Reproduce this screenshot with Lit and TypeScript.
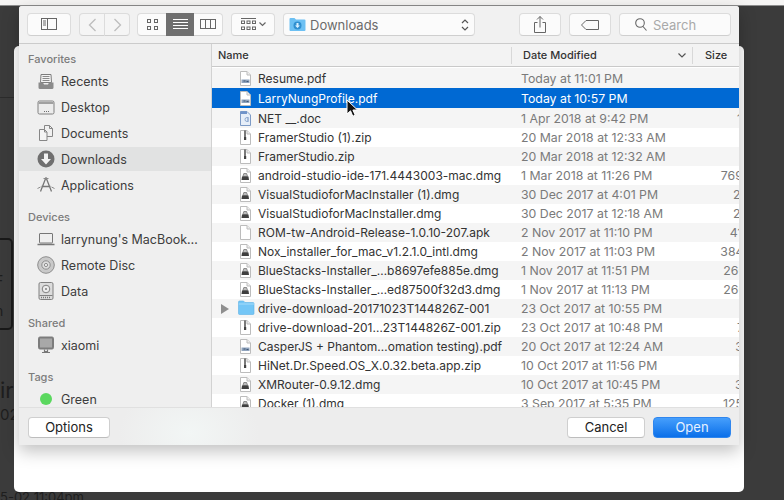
import { LitElement, html, svg, css } from "lit";
import { customElement } from "lit/decorators.js";

type Kind = "pdf" | "doc" | "zip" | "dmg" | "blank" | "folder";

const files: { name: string; date: string; size: string; kind: Kind; tall?: boolean; selected?: boolean }[] = [
  { name: "Resume.pdf", date: "Today at 11:01 PM", size: "", kind: "pdf", tall: true },
  { name: "LarryNungProfile.pdf", date: "Today at 10:57 PM", size: "", kind: "pdf", tall: true, selected: true },
  { name: "NET __.doc", date: "1 Apr 2018 at 9:42 PM", size: "1.4 MB", kind: "doc", tall: true },
  { name: "FramerStudio (1).zip", date: "20 Mar 2018 at 12:33 AM", size: "", kind: "zip" },
  { name: "FramerStudio.zip", date: "20 Mar 2018 at 12:32 AM", size: "", kind: "zip" },
  { name: "android-studio-ide-171.4443003-mac.dmg", date: "1 Mar 2018 at 11:26 PM", size: "769.6 MB", kind: "dmg" },
  { name: "VisualStudioforMacInstaller (1).dmg", date: "30 Dec 2017 at 4:01 PM", size: "27.1 MB", kind: "dmg" },
  { name: "VisualStudioforMacInstaller.dmg", date: "30 Dec 2017 at 12:18 AM", size: "27.1 MB", kind: "dmg" },
  { name: "ROM-tw-Android-Release-1.0.10-207.apk", date: "2 Nov 2017 at 11:10 PM", size: "41.5 MB", kind: "blank" },
  { name: "Nox_installer_for_mac_v1.2.1.0_intl.dmg", date: "2 Nov 2017 at 11:03 PM", size: "384.7 MB", kind: "dmg" },
  { name: "BlueStacks-Installer_…b8697efe885e.dmg", date: "1 Nov 2017 at 11:51 PM", size: "260.1 MB", kind: "dmg" },
  { name: "BlueStacks-Installer_…ed87500f32d3.dmg", date: "1 Nov 2017 at 11:13 PM", size: "260.1 MB", kind: "dmg" },
  { name: "drive-download-20171023T144826Z-001", date: "23 Oct 2017 at 10:55 PM", size: "", kind: "folder" },
  { name: "drive-download-201…23T144826Z-001.zip", date: "23 Oct 2017 at 10:48 PM", size: "7.2 MB", kind: "zip" },
  { name: "CasperJS + Phantom…omation testing).pdf", date: "20 Oct 2017 at 12:24 AM", size: "3.5 MB", kind: "pdf" },
  { name: "HiNet.Dr.Speed.OS_X.0.32.beta.app.zip", date: "10 Oct 2017 at 11:56 PM", size: "6.1 MB", kind: "zip" },
  { name: "XMRouter-0.9.12.dmg", date: "10 Oct 2017 at 10:45 PM", size: "3.2 MB", kind: "dmg" },
  { name: "Docker (1).dmg", date: "3 Sep 2017 at 5:35 PM", size: "125.5 MB", kind: "dmg" },
];

const sidebar = [
  { title: "Favorites", items: [["recents", "Recents"], ["desktop", "Desktop"], ["documents", "Documents"], ["downloads", "Downloads"], ["apps", "Applications"]] },
  { title: "Devices", items: [["laptop", "larrynung's MacBook…"], ["disc", "Remote Disc"], ["drive", "Data"]] },
  { title: "Shared", items: [["monitor", "xiaomi"]] },
  { title: "Tags", items: [["green", "Green"]] },
];

const sideIcons: Record<string, unknown> = {
  recents: svg`<path d="M4 2.500h10l.5 8h-11z" fill="#f4f4f4" stroke="#7d7d7d"/><path d="M5.500 4.500h7M5.500 6.500h7M5.500 8.500h7" stroke="#8a8a8a"/><path d="M1.500 10.500h4.500l1 2h4l1-2h4.500v5a1.500 1.500 0 0 1-1.500 1.500h-12a1.500 1.500 0 0 1-1.500-1.500z" fill="#8b8b8b"/>`,
  desktop: svg`<rect x="1" y="3" width="16" height="13" rx="1.500" fill="#ececec" stroke="#808080"/><path d="M1.500 5h15" stroke="#a0a0a0" stroke-width="2"/><path d="M7 13.500h1M9 13.500h1M11 13.500h1" stroke="#6c6c6c"/>`,
  documents: svg`<path d="M7.500 1.500h5l3 3v8h-8z" fill="#f0f0f0" stroke="#868686"/><path d="M2.500 5.500h5l2.500 2.500v8.500h-7.500z" fill="#f5f5f5" stroke="#868686"/><path d="M7.500 5.500v2.500h2.500M12.500 1.500v3h3" fill="none" stroke="#868686"/>`,
  downloads: svg`<circle cx="9" cy="9" r="8.500" fill="#6f6f6f"/><path d="M7 3.500h4v5.500h3l-5 5.500-5-5.500h3z" fill="#f2f2f2"/>`,
  apps: svg`<path d="M9 1.500l5.500 14M9 1.500l-5.500 14M4.500 10.500h9" fill="none" stroke="#777" stroke-width="1.300"/><path d="M.5 12.500l3-1.500M17.500 12.500l-3-1.500M6.500 2.500h5" stroke="#8a8a8a"/>`,
  laptop: svg`<rect x="2.500" y="3.500" width="13" height="9.500" rx=".5" fill="#efefef" stroke="#777"/><path d="M.5 14.500h17" stroke="#777" stroke-width="1.600"/>`,
  disc: svg`<circle cx="9" cy="9" r="8.300" fill="#c9c9c9" stroke="#8d8d8d"/><circle cx="9" cy="9" r="4.200" fill="#dedede" stroke="#8d8d8d"/><circle cx="9" cy="9" r="1.600" fill="#f4f4f4" stroke="#8d8d8d"/>`,
  drive: svg`<rect x="2" y=".5" width="14" height="17" rx="1.500" fill="#dcdcdc" stroke="#808080"/><circle cx="9" cy="7" r="3.800" fill="#ececec" stroke="#808080"/><circle cx="9" cy="7" r="1" fill="#808080"/><path d="M2.500 13.500h13" stroke="#808080"/><path d="M4 15.500h10" stroke="#777" stroke-width="1.500" stroke-dasharray="1 1"/>`,
  monitor: svg`<rect x="1.500" y="1" width="15" height="12" rx="1.500" fill="#7c7c7c" stroke="#7c7c7c"/><rect x="3" y="2.500" width="12" height="9" fill="#a8a8a8"/><path d="M7.500 13.500v2h3v-2M5 16.500h8" fill="none" stroke="#777" stroke-width="1.200"/>`,
  green: svg`<circle cx="9" cy="9" r="6" fill="#5bd85f"/>`,
};

const docShape = svg`<path d="M2.500 1.500h6.500l3.500 3.500v10.500h-10z" fill="#fff" stroke="#bcbcbc"/><path d="M9 1.500v3.500h3.500" fill="#eee" stroke="#bcbcbc"/>`;

const fileIcons: Record<Kind, unknown> = {
  blank: docShape,
  pdf: svg`${docShape}<path d="M3.500 9.500h8v3.500h-8z" fill="#8fa3bd"/><path d="M5.500 11h2M8.500 11.500h2" stroke="#3f5675"/>`,
  doc: svg`<path d="M2.500 1.500h6.500l3.500 3.500v10.500h-10z" fill="#e6eef8" stroke="#7d9bc6"/><path d="M2.500 1.500h6.500v2.500h-6.500z" fill="#6f93c9"/><path d="M9 7.500a2 2 0 1 0 0 4h1v-4zM10 7v5" fill="none" stroke="#8faad0"/>`,
  zip: svg`${docShape}<path d="M7 1.500v8" stroke="#333" stroke-width="1.300"/><rect x="6" y="8" width="2.200" height="3" fill="#444"/>`,
  dmg: svg`${docShape}<path d="M5.800 6.500h2.800l1 3h-4.800z" fill="#bdbdbd" stroke="#555" stroke-width=".6"/><path d="M4 9.500h6.500l.5 3.500h-7.500z" fill="#3f3f3f"/>`,
  folder: svg`<path d="M.5 2a1 1 0 0 1 1-1h4l1.500 1.500h8a1 1 0 0 1 1 1v10a1 1 0 0 1-1 1h-13.500a1 1 0 0 1-1-1z" fill="#74c6f6" stroke="#5cb2e6" stroke-width=".6"/><path d="M.8 4h15.400" stroke="#a5dcfb"/>`,
};

@customElement("app-root")
export class AppRoot extends LitElement {
  static styles = css`
    :host {
      display: block;
      position: relative;
      width: 784px;
      height: 500px;
      overflow: hidden;
      background: #3b3b3b;
      font-family: Inter, "Liberation Sans", sans-serif;
      font-size: 12.5px;
      color: #333;
    }
    .menubar {
      height: 5px;
      background: #f6f5f4;
      border-bottom: 1px solid #8d8d8d;
    }
    .behind-box {
      position: absolute;
      left: -6px;
      top: 238px;
      width: 15px;
      height: 88px;
      border: 2px solid #191919;
      border-radius: 5px;
    }
    .behind-line {
      position: absolute;
      left: 0;
      top: 97px;
      width: 19px;
      height: 1px;
      background: #2c2c2c;
    }
    .behind-text {
      position: absolute;
      color: #1e1e1e;
      white-space: nowrap;
    }
    .t1 { left: 0; top: 377px; font-size: 22px; }
    .t2 { left: 0; top: 405px; font-size: 15px; }
    .t3 { left: 0; top: 489px; font-size: 13px; }
    .t4 { left: -5px; top: 272px; font-size: 14px; }
    .t5 { left: -5px; top: 302px; font-size: 14px; }
    .back-window {
      position: absolute;
      left: 14px;
      top: 46px;
      width: 730px;
      height: 446px;
      background: #fff;
      border-radius: 5px;
    }
    .dialog {
      position: absolute;
      left: 19px;
      top: 6px;
      width: 720px;
      height: 439px;
      display: flex;
      flex-direction: column;
      overflow: hidden;
      background: #ededed;
      border-radius: 3px 3px 0 0;
    }
    .dialog-shadow {
      position: absolute;
      left: 19px;
      top: 6px;
      width: 720px;
      height: 439px;
      box-shadow: 0 6px 16px rgba(0, 0, 0, 0.25);
    }
    .toolbar {
      flex: none;
      box-sizing: border-box;
      height: 38px;
      padding: 7px 8px 0;
      display: flex;
      align-items: flex-start;
      background: #f1f1f1;
      border-bottom: 1px solid #cbcbcb;
    }
    .btn {
      box-sizing: border-box;
      height: 23px;
      display: flex;
      align-items: center;
      justify-content: center;
      background: #fbfbfb;
      border: 1px solid #dcdcdc;
      border-bottom-color: #cfcfcf;
      border-radius: 4px;
    }
    .btn svg { display: block; }
    .sidebar-btn { width: 44px; margin-right: 8px; }
    .nav { display: flex; margin-right: 7px; }
    .nav .btn { width: 26px; background: #f5f5f5; }
    .nav .btn:first-child { border-radius: 4px 0 0 4px; }
    .nav .btn:last-child { border-radius: 0 4px 4px 0; margin-left: -1px; }
    .seg { display: flex; width: 86px; margin-right: 8px; }
    .seg .btn { flex: 1; border-radius: 0; border-left: none; border-right: none; }
    .seg .btn:first-child { border-radius: 4px 0 0 4px; border-left: 1px solid #dcdcdc; }
    .seg .btn:last-child { border-radius: 0 4px 4px 0; border-right: 1px solid #dcdcdc; }
    .seg .btn.on { background: #6f6f6f; border-color: #6f6f6f; }
    .arrange { width: 44px; margin-right: 8px; gap: 3px; }
    .path {
      width: 192px;
      margin-right: 44px;
      justify-content: flex-start;
      padding: 0 5px;
      gap: 4px;
      color: #6b6b6b;
      font-size: 13px;
    }
    .path .name { flex: 1; }
    .tool { width: 42px; margin-right: 8px; }
    .search {
      width: 112px;
      justify-content: flex-start;
      padding-left: 15px;
      gap: 6px;
      color: #a9a9a9;
      font-size: 13px;
    }
    .body { flex: 1; min-height: 0; display: flex; }
    .side {
      box-sizing: border-box;
      flex: none;
      width: 193px;
      padding-top: 7px;
      background: #efefef;
      border-right: 1px solid #d2d2d2;
      overflow: hidden;
    }
    .section + .section { margin-top: 11px; }
    .heading {
      height: 17px;
      line-height: 17px;
      padding-left: 9px;
      font-size: 11px;
      font-weight: 500;
      color: #7c7c7c;
    }
    .item {
      height: 26px;
      padding-left: 18px;
      display: flex;
      align-items: center;
      gap: 6px;
      color: #3d3d3d;
      white-space: nowrap;
    }
    .item.on { height: 24px; margin: 1px 0; background: #e1e2e2; }
    .list {
      flex: 1;
      min-width: 0;
      display: flex;
      flex-direction: column;
      background: #fff;
    }
    .list-head {
      flex: none;
      box-sizing: border-box;
      height: 23px;
      display: flex;
      align-items: center;
      background: #f3f3f3;
      border-bottom: 1px solid #c9c9c9;
      font-size: 11px;
      font-weight: 500;
      color: #333;
    }
    .col-name, .col-date { box-sizing: border-box; height: 17px; line-height: 17px; border-right: 1px solid #d8d8d8; }
    .col-name { width: 300px; padding-left: 6px; }
    .col-date {
      width: 181px;
      padding: 0 6px 0 11px;
      display: flex;
      align-items: center;
      justify-content: space-between;
    }
    .col-size { padding-left: 12px; }
    .rows { flex: 1; min-height: 0; padding-top: 1px; overflow: hidden; }
    .row {
      height: 19px;
      display: grid;
      grid-template-columns: 300px 180px 84px;
      align-items: center;
      overflow: hidden;
      white-space: nowrap;
      font-size: 12px;
    }
    .row.tall { height: 20px; }
    .row.odd { background: #f5f5f5; }
    .row.selected { background: #0069d3; color: #fff; }
    .row .name-cell { display: flex; align-items: center; padding-left: 9px; }
    .tri { width: 8px; height: 10px; flex: none; margin-right: 9px; }
    .file-icon { width: 17px; height: 17px; flex: none; margin-right: 3px; }
    .row .date { padding-left: 9px; color: #7a7a7a; font-size: 12.3px; }
    .row.selected .date { color: #fff; }
    .row .size { text-align: right; color: #7a7a7a; font-size: 12.3px; }
    .footer {
      flex: none;
      box-sizing: border-box;
      height: 38px;
      padding: 9px 8px 0 9px;
      display: flex;
      align-items: flex-start;
      gap: 8px;
      background: radial-gradient(ellipse 70px 50px at 170px 25px, #f2f6f5, #ededed);
      border-top: 1px solid #e0e0e0;
    }
    .push {
      box-sizing: border-box;
      width: 78px;
      height: 21px;
      padding-bottom: 2px;
      display: flex;
      align-items: center;
      justify-content: center;
      background: #fff;
      border: 1px solid #cfcfcf;
      border-bottom-color: #bdbdbd;
      border-radius: 4px;
      color: #222;
      font-size: 13px;
    }
    .options { width: 82px; margin-right: auto; }
    .open {
      background: linear-gradient(#469ffc, #0b6fe9);
      border-color: #2f86ee;
      color: #e6f1ff;
    }
    .cursor { position: absolute; left: 346px; top: 99px; }
  `;

  private renderRow(f: (typeof files)[number], i: number) {
    const cls = ["row", f.tall ? "tall" : "", i % 2 === 0 ? "odd" : "", f.selected ? "selected" : ""].join(" ");
    return html`
      <div class=${cls}>
        <div class="name-cell">
          <svg class="tri" viewBox="0 0 8 10">
            ${f.kind === "folder" ? svg`<path d="M0 0l8 5-8 5z" fill="#8f8f8f"/>` : ""}
          </svg>
          <svg class="file-icon" viewBox="0 0 17 17">${fileIcons[f.kind]}</svg>
          <span>${f.name}</span>
        </div>
        <div class="date">${f.date}</div>
        <div class="size">${f.size}</div>
      </div>
    `;
  }

  render() {
    return html`
      <div class="menubar"></div>
      <div class="behind-line"></div>
      <div class="behind-box"></div>
      <div class="behind-text t4">F</div>
      <div class="behind-text t5">n</div>
      <div class="behind-text t1">ir</div>
      <div class="behind-text t2">02</div>
      <div class="behind-text t3">5-02 11:04pm</div>
      <div class="back-window"></div>
      <div class="dialog-shadow"></div>
      <div class="dialog">
        <div class="toolbar">
          <div class="btn sidebar-btn">
            <svg width="16" height="13" viewBox="0 0 16 13" fill="none" stroke="#666">
              <rect x=".5" y=".5" width="15" height="11"/><path d="M6.500 .5v11M2 3h3M2 5h3M2 7h3" />
            </svg>
          </div>
          <div class="nav">
            <div class="btn">
              <svg width="9" height="14" viewBox="0 0 9 14" fill="none" stroke="#bdbdbd" stroke-width="1.300"><path d="M7.500 1l-6 6 6 6"/></svg>
            </div>
            <div class="btn">
              <svg width="9" height="14" viewBox="0 0 9 14" fill="none" stroke="#bdbdbd" stroke-width="1.300"><path d="M1.500 1l6 6-6 6"/></svg>
            </div>
          </div>
          <div class="seg">
            <div class="btn">
              <svg width="11" height="11" viewBox="0 0 11 11" fill="none" stroke="#666"><rect x=".5" y=".5" width="3" height="3"/><rect x="7.500" y=".5" width="3" height="3"/><rect x=".5" y="7.500" width="3" height="3"/><rect x="7.500" y="7.500" width="3" height="3"/></svg>
            </div>
            <div class="btn on">
              <svg width="15" height="11" viewBox="0 0 15 11" stroke="#fff"><path d="M0 .5h15M0 3.500h15M0 6.500h15M0 9.500h15"/></svg>
            </div>
            <div class="btn">
              <svg width="16" height="11" viewBox="0 0 16 11" fill="none" stroke="#666"><rect x=".5" y=".5" width="15" height="9"/><path d="M5.500 .5v9M10.500 .5v9"/></svg>
            </div>
          </div>
          <div class="btn arrange">
            <svg width="15" height="13" viewBox="0 0 15 13" fill="none" stroke="#666">
              <path d="M0 .5h15"/><rect x=".5" y="3" width="3" height="2.500"/><rect x="6" y="3" width="3" height="2.500"/><rect x="11.500" y="3" width="3" height="2.500"/>
              <rect x=".5" y="9" width="3" height="2.500"/><rect x="6" y="9" width="3" height="2.500"/><rect x="11.500" y="9" width="3" height="2.500"/>
            </svg>
            <svg width="7" height="5" viewBox="0 0 7 5" fill="none" stroke="#666" stroke-width="1.200"><path d="M.5 .5l3 3 3-3"/></svg>
          </div>
          <div class="btn path">
            <svg width="17" height="15" viewBox="0 0 17 15">
              <path d="M.5 2a1 1 0 0 1 1-1h4l1.500 1.500h8.500a1 1 0 0 1 1 1v9.500a1 1 0 0 1-1 1h-14a1 1 0 0 1-1-1z" fill="#6cc0f3"/>
              <circle cx="8.500" cy="8.500" r="4" fill="#2f8fd0"/><path d="M7.500 6h2v2.500h1.500l-2.500 2.500-2.500-2.500h1.500z" fill="#d8f0ff"/>
            </svg>
            <span class="name">Downloads</span>
            <svg width="8" height="14" viewBox="0 0 8 14" fill="none" stroke="#555" stroke-width="1.200"><path d="M1 5l3-3 3 3M1 9l3 3 3-3"/></svg>
          </div>
          <div class="btn tool">
            <svg width="12" height="17" viewBox="0 0 12 17" fill="none" stroke="#666"><path d="M3.500 6.500h-3v10h11v-10h-3M6 11.500v-11M3 3.500l3-3 3 3"/></svg>
          </div>
          <div class="btn tool">
            <svg width="18" height="10" viewBox="0 0 18 10" fill="none" stroke="#666"><path d="M5 .5h12.500v9h-12.500l-4.500-4.500z"/></svg>
          </div>
          <div class="btn search">
            <svg width="12" height="13" viewBox="0 0 12 13" fill="none" stroke="#666" stroke-width="1.100"><circle cx="5" cy="5" r="4.300"/><path d="M8 8.500l3.500 4"/></svg>
            <span>Search</span>
          </div>
        </div>
        <div class="body">
          <div class="side">
            ${sidebar.map(
              (s) => html`
                <div class="section">
                  <div class="heading">${s.title}</div>
                  ${s.items.map(
                    ([icon, label]) => html`
                      <div class="item ${icon === "downloads" ? "on" : ""}">
                        <svg width="18" height="18" viewBox="0 0 18 18">${sideIcons[icon]}</svg>
                        <span>${label}</span>
                      </div>
                    `
                  )}
                </div>
              `
            )}
          </div>
          <div class="list">
            <div class="list-head">
              <div class="col-name">Name</div>
              <div class="col-date">
                <span>Date Modified</span>
                <svg width="8" height="5" viewBox="0 0 8 5" fill="none" stroke="#555" stroke-width="1.200"><path d="M.5 .5l3.500 3.500 3.500-3.500"/></svg>
              </div>
              <div class="col-size">Size</div>
            </div>
            <div class="rows">${files.map((f, i) => this.renderRow(f, i))}</div>
          </div>
        </div>
        <div class="footer">
          <div class="push options">Options</div>
          <div class="push">Cancel</div>
          <div class="push open">Open</div>
        </div>
      </div>
      <svg class="cursor" width="12" height="19" viewBox="0 0 12 19">
        <path d="M1 1v14l3.500-3.200 2.300 5.400 2.400-1-2.300-5.200h4.600z" fill="#111" stroke="#fff" stroke-width="1"/>
      </svg>
    `;
  }
}
